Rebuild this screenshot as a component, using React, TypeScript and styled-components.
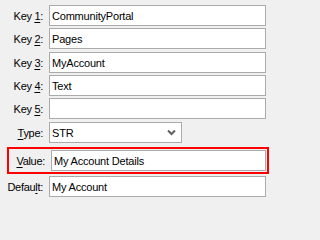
import React from "react";
import styled, { createGlobalStyle } from "styled-components";

const Global = createGlobalStyle`
  html, body { margin: 0; padding: 0; background: #f0f0f0; }
  body { font-family: "Liberation Sans", Arial, sans-serif; font-size: 11px; color: #000; }
`;

const Form = styled.div`
  width: 271px;
  height: 202px;
  box-sizing: border-box;
  padding: 5px 5px 0 0;
  display: flex;
  flex-direction: column;
  background: #f0f0f0;
`;

const Row = styled.div<{ $top?: number }>`
  display: flex;
  align-items: center;
  height: 21px;
  margin-top: ${(p) => p.$top ?? 0}px;
`;

const Label = styled.label`
  width: 43px;
  margin-right: 6px;
  text-align: right;
  white-space: nowrap;
  color: #000;
  letter-spacing: -0.3px;
  u { text-decoration: underline; text-underline-offset: 2px; }
`;

const Field = styled.div`
  flex: 1;
  height: 21px;
  box-sizing: border-box;
  border: 1px solid #ababab;
  background: #fff;
  padding: 0 2px;
  display: flex;
  align-items: center;
  white-space: nowrap;
  overflow: hidden;
  color: #000;
  letter-spacing: -0.2px;
`;

const Select = styled.div`
  width: 133px;
  height: 21px;
  box-sizing: border-box;
  border: 1px solid #ababab;
  background: #fff;
  padding: 0 2px;
  display: flex;
  align-items: center;
  justify-content: space-between;
  letter-spacing: -0.2px;
`;

const Highlight = styled.div`
  margin: 4px -3px 0 7px;
  border: 2px solid #ff0000;
  padding: 1px 1px 1px 0;
  display: flex;
  align-items: center;
  height: 21px;
  box-sizing: content-box;
`;

const HLabel = styled(Label)`
  width: 36px;
`;

const Chevron = () => (
  <svg width="9" height="7" viewBox="0 0 9 7" style={{ marginRight: 3 }}>
    <path d="M1 1.5 L4.5 5 L8 1.5" fill="none" stroke="#606060" strokeWidth="2" />
  </svg>
);

const rows: [string, string, string][] = [
  ["Key ", "1", "CommunityPortal"],
  ["Key ", "2", "Pages"],
  ["Key ", "3", "MyAccount"],
  ["Key ", "4", "Text"],
  ["Key ", "5", ""],
];
const tops = [0, 2, 3, 2, 2];

export default function App() {
  return (
    <>
      <Global />
      <Form>
        {rows.map(([pre, acc, val], i) => (
          <Row key={i} $top={tops[i]}>
            <Label>
              {pre}
              <u>{acc}</u>:
            </Label>
            <Field>{val}</Field>
          </Row>
        ))}
        <Row $top={3}>
          <Label>
            <u>T</u>ype:
          </Label>
          <Select>
            <span>STR</span>
            <Chevron />
          </Select>
        </Row>
        <Highlight>
          <HLabel>
            <u>V</u>alue:
          </HLabel>
          <Field>My Account Details</Field>
        </Highlight>
        <Row $top={2}>
          <Label>
            Defau<u>l</u>t:
          </Label>
          <Field>My Account</Field>
        </Row>
      </Form>
    </>
  );
}
